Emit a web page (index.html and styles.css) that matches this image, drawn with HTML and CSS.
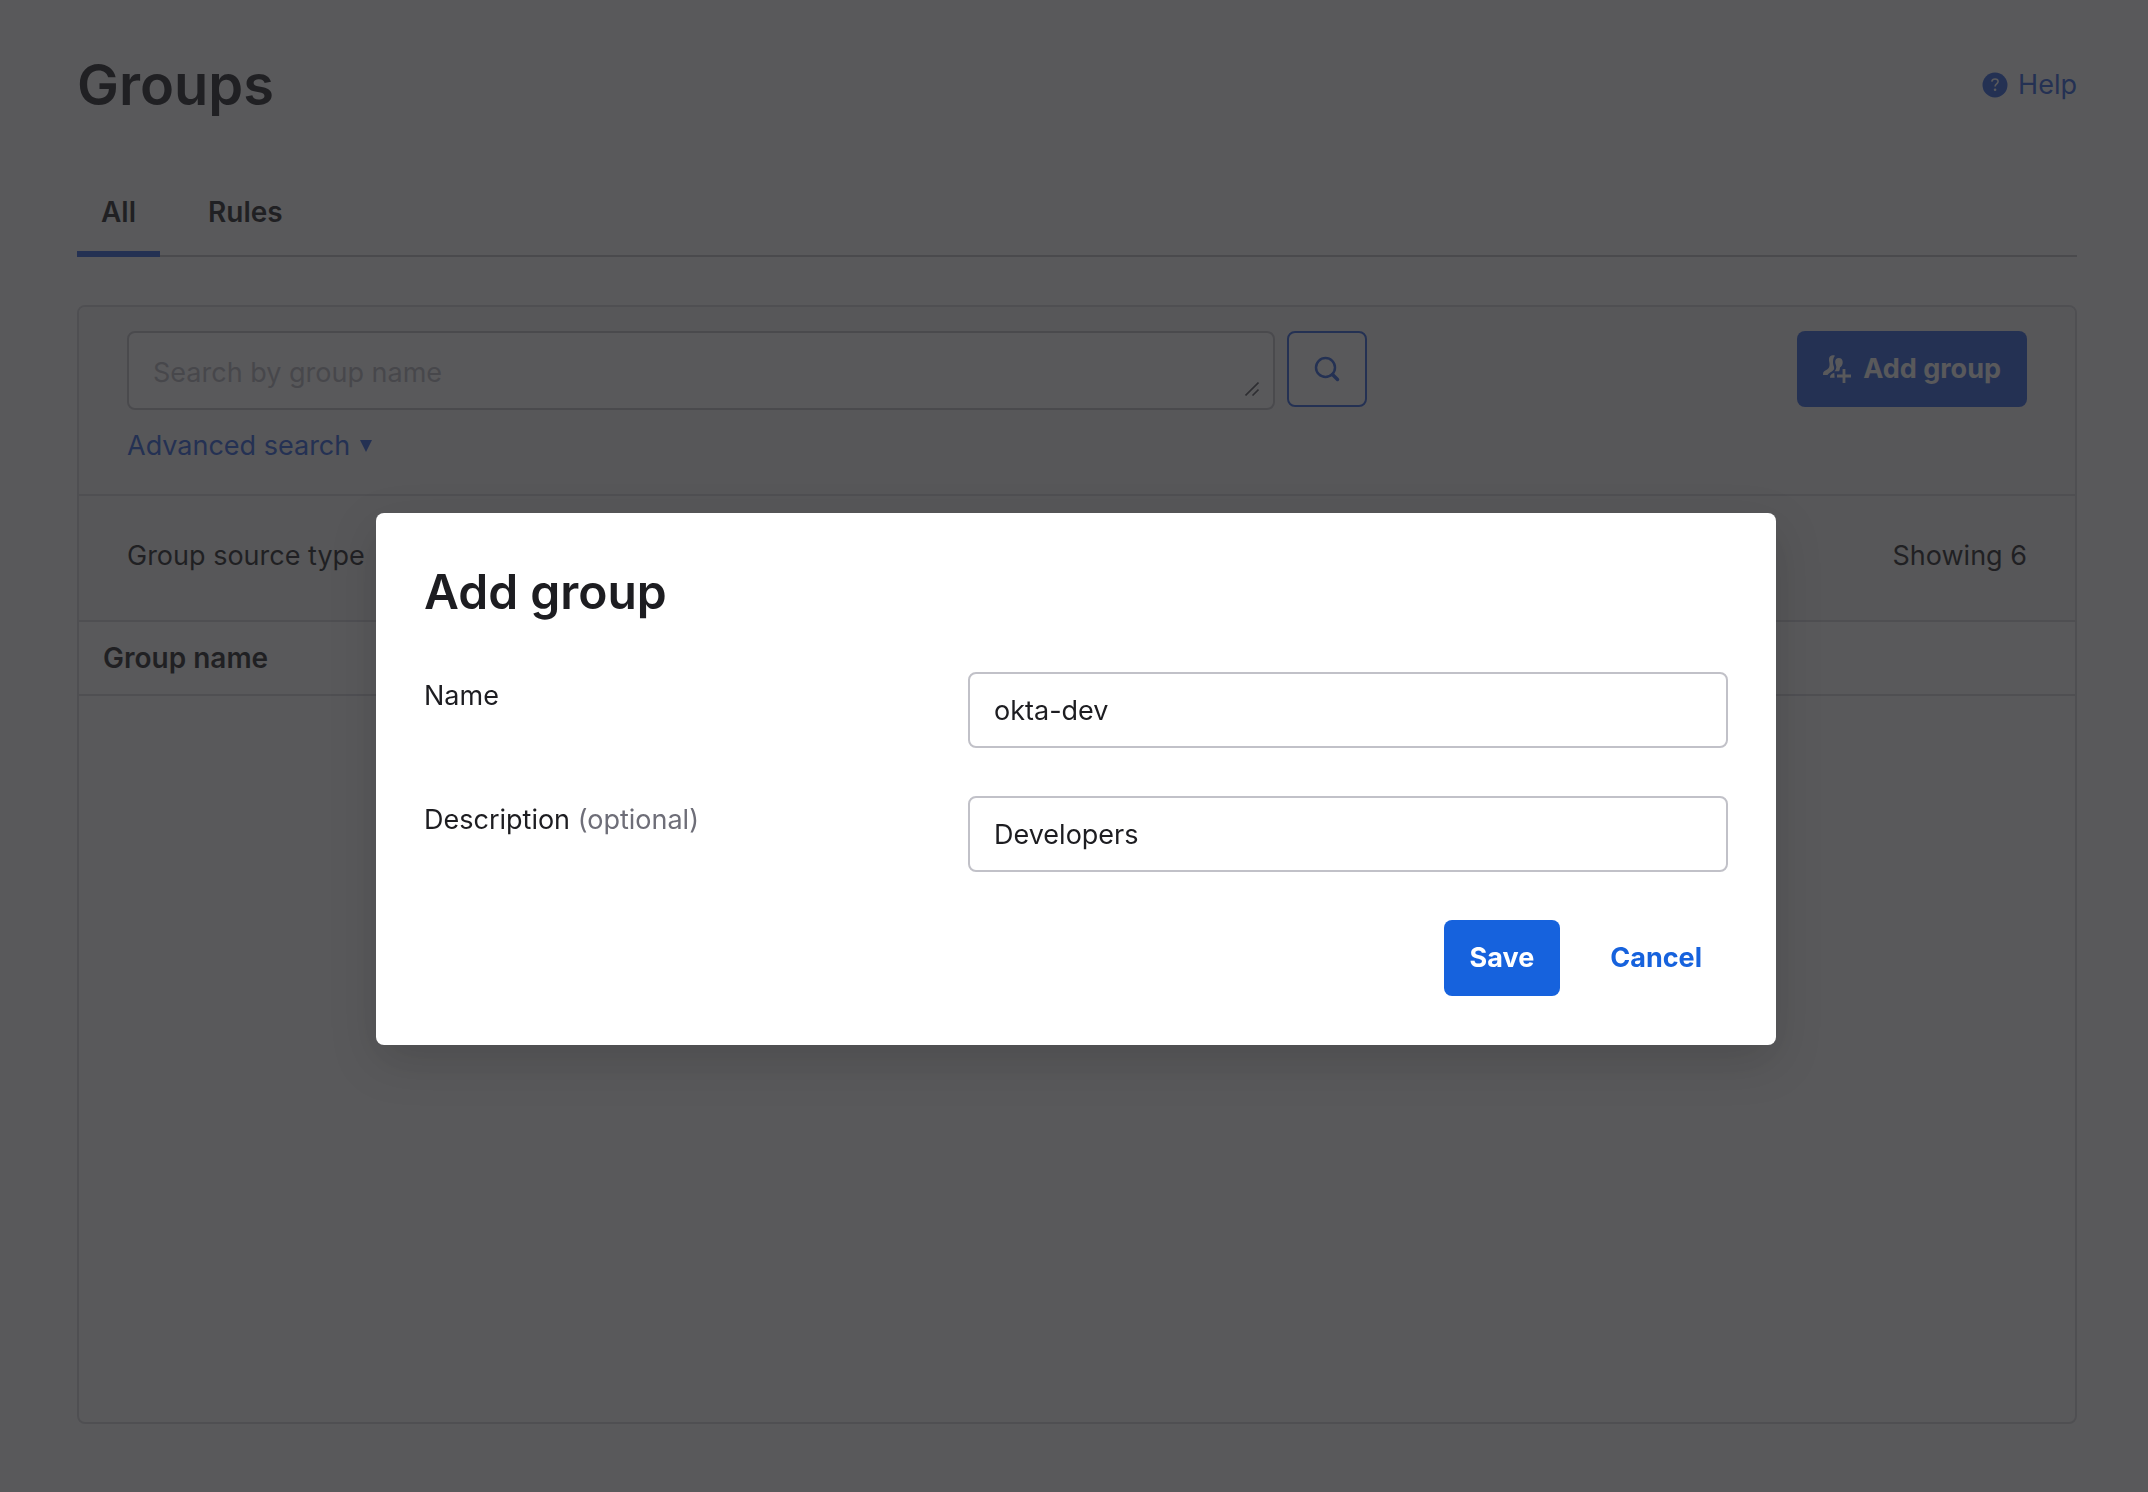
FILE: index.html
```html
<!DOCTYPE html>
<html lang="en">
<head>
  <meta charset="UTF-8">
  <meta name="viewport" content="width=device-width, initial-scale=1">
  <title>Groups</title>
  <link rel="stylesheet" href="styles.css">
</head>
<body>

<main class="page">
  <header class="page-header">
    <h1>Groups</h1>
    <a class="help" href="#help">
      <svg class="help-icon" viewBox="0 0 26 26" aria-hidden="true">
        <circle cx="13" cy="13" r="12.5" fill="currentColor"/>
        <path d="M9.8 9.6c.3-1.7 1.6-2.6 3.2-2.6 1.8 0 3.1 1 3.1 2.6 0 2.3-3 2.3-3 4.8" fill="none" stroke="#fff" stroke-width="1.6"/>
        <circle cx="13.1" cy="17.8" r="1.3" fill="#fff"/>
      </svg>
      Help
    </a>
  </header>

  <nav class="tabs">
    <a class="tab active" href="#all">All</a>
    <a class="tab" href="#rules">Rules</a>
  </nav>

  <section class="panel">
    <div class="toolbar">
      <div class="search">
        <div class="search-row">
          <div class="search-box">
            <textarea rows="1" placeholder="Search by group name" aria-label="Search by group name"></textarea>
            <svg class="grip" viewBox="0 0 14 14" aria-hidden="true">
              <path d="M.5 13.5 13.5.5M7.5 13.5l6-6" fill="none" stroke="currentColor" stroke-width="1.6"/>
            </svg>
          </div>
          <button class="btn btn-outline" type="button" aria-label="Search">
            <svg class="search-icon" viewBox="0 0 26 26" aria-hidden="true">
              <circle cx="11.5" cy="11.5" r="9.5" fill="none" stroke="currentColor" stroke-width="2.5"/>
              <path d="M18.5 18.5 23.5 23.5" stroke="currentColor" stroke-width="3.5" stroke-linecap="round"/>
            </svg>
          </button>
        </div>
        <a class="advanced" href="#advanced">
          Advanced search
          <svg class="caret" viewBox="0 0 12 12" aria-hidden="true"><path d="M0 0h12L6 12z" fill="currentColor"/></svg>
        </a>
      </div>
      <button class="btn btn-primary" type="button">
        <svg class="group-icon" viewBox="0 0 28 28" aria-hidden="true">
          <path d="M12 .8C10.5.1 8.500.2 7.200 1.200 5.800 2.400 5.800 4.800 6.300 7.200c.4 2 .4 4.300-.6 5.800C4.500 14.900 1 15.500.2 17.400L0 20h4.500c1.300-2.600 5.500-3.300 6.500-5.800.6-1.600-.6-3.500-.9-5.400C9.700 5.800 10.300 2.600 12 .8z" fill="currentColor"/>
          <path d="M15.800 3c-2.300 0-3.700 1.600-3.600 4 .1 1.800.9 3 1.100 4.500.2 1.700-.5 3.400-1.800 4.700h4.600c.5-1.200.8-2.200.9-3.700 1.800-.8 2.700-3 2.700-5.400C19.700 4.600 18.200 3 15.800 3zM11.300 17.800c-2.500.9-4.300 2-4.300 5h4.600z" fill="currentColor"/>
          <path d="M21 14v14M14 21h14" stroke="currentColor" stroke-width="2.8"/>
        </svg>
        Add group
      </button>
    </div>

    <div class="filters">
      <span>Group source type</span>
      <span>Showing 6</span>
    </div>

    <table class="groups">
      <thead>
        <tr><th scope="col">Group name</th></tr>
      </thead>
    </table>
  </section>
</main>

<div class="scrim">
  <form class="dialog" role="dialog" aria-modal="true" aria-labelledby="dialog-title">
    <h2 id="dialog-title">Add group</h2>
    <div class="field">
      <label for="name">Name</label>
      <input type="text" id="name" value="okta-dev">
    </div>
    <div class="field">
      <label for="description">Description <span class="optional">(optional)</span></label>
      <input type="text" id="description" value="Developers">
    </div>
    <div class="actions">
      <button class="btn btn-primary" type="submit">Save</button>
      <button class="btn btn-text" type="button">Cancel</button>
    </div>
  </form>
</div>

</body>
</html>
```

FILE: styles.css
```css
* {
  box-sizing: border-box;
}

body {
  --blue: #1662dd;
  margin: 0;
  font-family: Inter, Roboto, sans-serif;
  font-size: 27px;
  line-height: 40px;
  color: #1d1d21;
  background: #fff;
}

a {
  color: var(--blue);
  text-decoration: none;
}

h1, h2 {
  margin: 0;
  font-weight: 600;
}

h1 {
  font-size: 56px;
  line-height: 74px;
}

h2 {
  font-size: 48px;
  line-height: 62px;
}

/* page */
.page {
  --blue: #2d60e0;
  display: flex;
  flex-direction: column;
  min-height: 100vh;
  padding: 48px 71px 68px 77px;
}

.page-header {
  display: flex;
  justify-content: space-between;
  align-items: center;
}

.help {
  display: flex;
  align-items: center;
  gap: 10px;
}

.help-icon {
  width: 26px;
  height: 26px;
}

.tabs {
  display: flex;
  gap: 24px;
  height: 65px;
  margin-top: 70px;
  font-size: 28px;
  box-shadow: inset 0 -2px #c1c1c8;
}

.tab {
  padding: 0 24px;
  font-weight: 600;
  color: #1d1d21;
}

.tab.active {
  border-bottom: 6px solid var(--blue);
}

.panel {
  flex: 1;
  margin-top: 48px;
  border: 2px solid #d7d7dc;
  border-radius: 8px;
  overflow: hidden;
}

.toolbar, .filters {
  display: flex;
  justify-content: space-between;
  padding: 24px 48px;
  background: #f5f5f6;
  border-bottom: 2px solid #d7d7dc;
}

.toolbar {
  align-items: flex-start;
  padding-bottom: 28px;
}

.filters {
  padding: 40px 48px 44px;
}

.search {
  flex: 0 1 1240px;
}

.search-row {
  display: flex;
  align-items: flex-start;
  gap: 12px;
}

.search-box {
  position: relative;
  flex: 1;
}

.search-box textarea {
  display: block;
  width: 100%;
  height: 79px;
  padding: 20px 24px 0;
  resize: none;
  overflow: hidden;
}

textarea::placeholder {
  color: #b8b8c0;
}

.grip {
  position: absolute;
  right: 16px;
  bottom: 14px;
  width: 14px;
  height: 14px;
  color: #55555c;
}

.advanced {
  display: flex;
  align-items: center;
  gap: 10px;
  width: fit-content;
  margin-top: 16px;
}

.caret {
  width: 12px;
  height: 12px;
}

.groups {
  width: 100%;
  border-collapse: collapse;
}

.groups th {
  padding: 16px 24px;
  font-size: 28px;
  font-weight: 600;
  text-align: left;
  border-bottom: 2px solid #d7d7dc;
}

/* controls */
input, textarea {
  font: inherit;
  color: inherit;
  background: #fff;
  border: 2px solid #c1c1c8;
  border-radius: 8px;
  outline: none;
}

.btn {
  display: flex;
  align-items: center;
  gap: 12px;
  height: 76px;
  padding: 0 26px;
  border: 0;
  border-radius: 8px;
  font: inherit;
  font-weight: 700;
  cursor: pointer;
}

.btn-primary {
  color: #fff;
  background: var(--blue);
}

.btn-outline {
  justify-content: center;
  width: 80px;
  padding: 0;
  color: var(--blue);
  background: #fff;
  border: 2px solid var(--blue);
}

.btn-text {
  color: var(--blue);
  background: none;
}

.search-icon {
  width: 26px;
  height: 26px;
}

.group-icon {
  width: 28px;
  height: 28px;
}

/* modal */
.scrim {
  position: fixed;
  inset: 0;
  display: flex;
  justify-content: center;
  align-items: flex-start;
  padding: 513px 0 0 4px;
  background: rgba(33, 33, 36, 0.75);
}

.dialog {
  width: 100%;
  max-width: 1400px;
  padding: 48px 48px 49px;
  background: #fff;
  border-radius: 8px;
  box-shadow: 0 16px 48px rgba(0, 0, 0, 0.15);
}

.dialog h2 {
  margin-bottom: 49px;
}

.field {
  display: grid;
  grid-template-columns: 1fr 760px;
  margin-bottom: 48px;
}

.field label {
  padding-top: 4px;
}

.field input {
  width: 100%;
  height: 76px;
  padding: 0 24px;
}

.optional {
  color: #6e6e78;
}

.actions {
  display: flex;
  justify-content: flex-end;
  gap: 24px;
}
```
